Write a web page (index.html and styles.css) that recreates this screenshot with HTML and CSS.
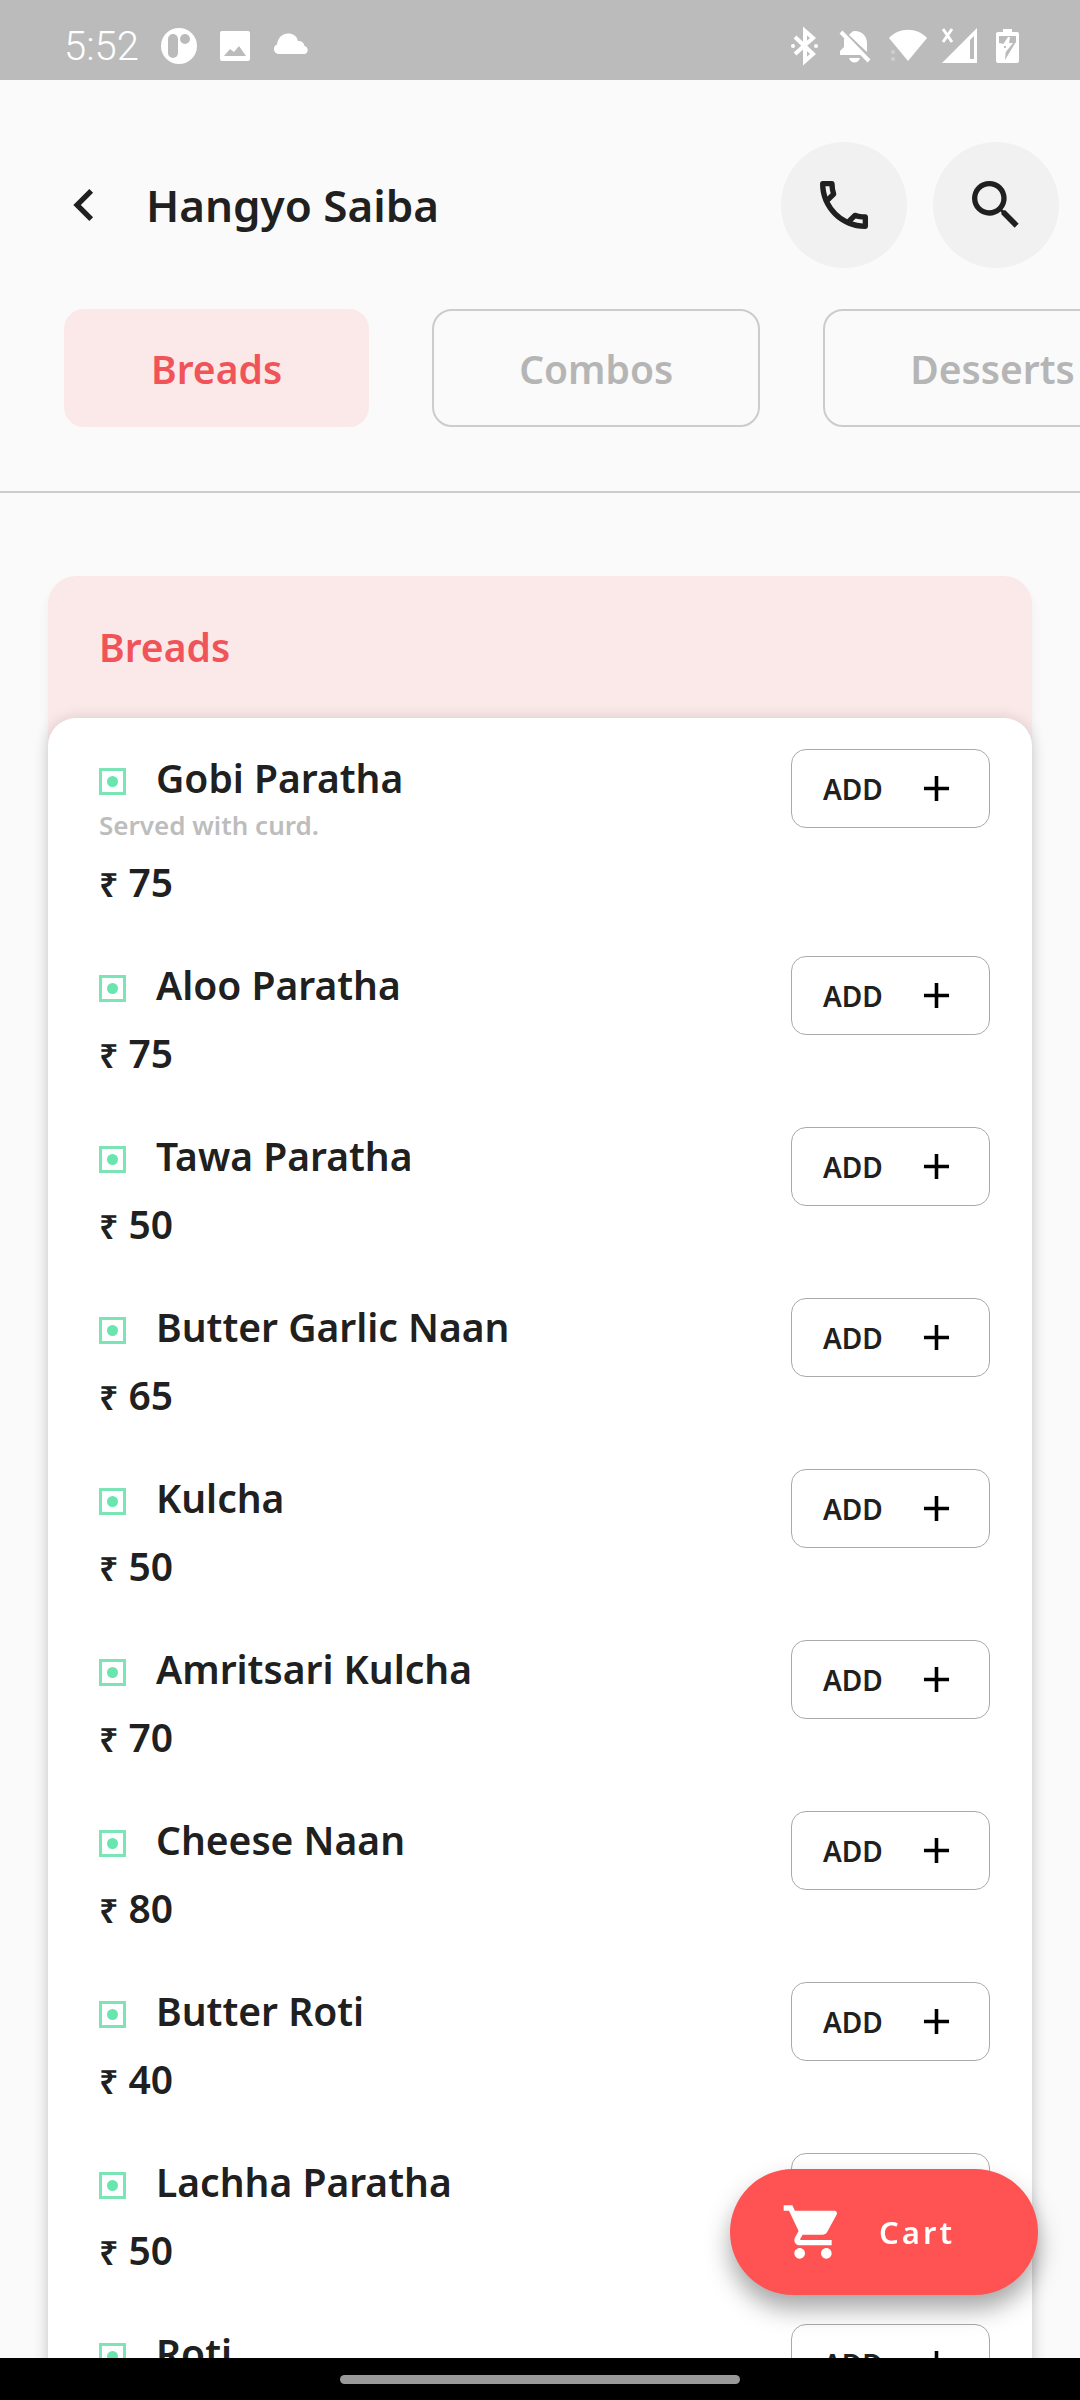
FILE: index.html
```html
<!DOCTYPE html>
<html lang="en">
<head>
  <meta charset="UTF-8">
  <meta name="viewport" content="width=device-width, initial-scale=1.0">
  <title>Hangyo Saiba</title>
  <link rel="stylesheet" href="styles.css">
</head>
<body>
  <div class="status-bar">
    <div class="status-left">
      <span class="clock">5:52</span>
      <svg viewBox="0 0 36 36"><circle cx="18" cy="18" r="18"/><rect class="cut" x="7" y="6" width="10" height="24" rx="5"/><circle class="cut" cx="24" cy="11" r="5"/></svg>
      <svg viewBox="0 0 36 36"><path fill-rule="evenodd" d="M5 3h26a2 2 0 0 1 2 2v26a2 2 0 0 1-2 2H5a2 2 0 0 1-2-2V5a2 2 0 0 1 2-2zm2 25h22l-7-10-5 6-4-3z"/></svg>
      <svg viewBox="0 0 36 36"><path d="M5 26a5 5 0 0 1-1-9.500C5 9 10 5 16 5.500c5 .500 8 3 9 7.500 4 0 6 2 6.500 5A4.200 4.200 0 0 1 32 26z"/></svg>
    </div>
    <div class="status-right">
      <svg viewBox="0 0 40 40"><path class="line" d="M11 11l18 17-8 7V5l8 7-18 16"/><circle cx="9" cy="20" r="2"/><circle cx="32" cy="20" r="2"/></svg>
      <svg viewBox="0 0 40 40"><path d="M14 9c2-2 3-4 6-4 7 0 12 5 12 12v9zM9 12l21 17H5v-4l4-4zM14 32h11c-2 6-9 6-11 0z"/><path class="line" d="M6 6l28 29"/></svg>
      <svg viewBox="0 0 40 40"><path d="M3 12c10-11 28-11 38 0L22 35z"/><circle class="faint" cx="7" cy="26" r="2"/><circle class="faint" cx="7" cy="33" r="2"/></svg>
      <svg viewBox="0 0 40 40"><path fill-rule="evenodd" d="M5 37L40 2v35zM33 14v19h4V10z"/><path class="thin" d="M6 3l9 13M15 3L6 16"/></svg>
      <svg viewBox="0 0 40 40"><path fill-rule="evenodd" d="M15 3h9v3h5a2 2 0 0 1 2 2v27a2 2 0 0 1-2 2H10a2 2 0 0 1-2-2V8a2 2 0 0 1 2-2h5zm-4 7v7l5 1v4h2l-1 12 9-15 2-3v-6z"/><path d="M20 11l-6 9h4l-1 7 8-10h-4l1-6z"/></svg>
    </div>
  </div>

  <header class="top">
    <button class="back" aria-label="Back">
      <svg viewBox="0 0 24 24"><path d="M15.410 7.410L14 6l-6 6 6 6 1.410-1.410L10.830 12z"/></svg>
    </button>
    <h1>Hangyo Saiba</h1>
    <button class="round" aria-label="Call">
      <svg viewBox="0 0 24 24"><path d="M6.540 5c.060.890.210 1.760.450 2.590l-1.200 1.200c-.410-1.200-.670-2.470-.760-3.790h1.510m9.860 12.020c.850.240 1.720.390 2.600.450v1.490c-1.320-.090-2.590-.350-3.800-.750l1.200-1.190M7.500 3H4c-.550 0-1 .450-1 1 0 9.390 7.610 17 17 17 .550 0 1-.450 1-1v-3.490c0-.550-.450-1-1-1-1.240 0-2.450-.200-3.570-.570a.840.840 0 0 0-.310-.050c-.260 0-.510.100-.710.290l-2.200 2.200a15.150 15.150 0 0 1-6.590-6.590l2.200-2.200c.280-.280.360-.670.250-1.020A11.360 11.360 0 0 1 8.500 4c0-.550-.450-1-1-1z"/></svg>
    </button>
    <button class="round" aria-label="Search">
      <svg viewBox="0 0 24 24"><path d="M15.500 14h-.790l-.280-.270A6.470 6.470 0 0 0 16 9.500 6.500 6.500 0 1 0 9.500 16c1.610 0 3.090-.590 4.230-1.570l.270.280v.790l5 4.990L20.490 19l-4.990-5zm-6 0C7.010 14 5 11.990 5 9.500S7.010 5 9.500 5 14 7.010 14 9.500 11.990 14 9.500 14z"/></svg>
    </button>
  </header>

  <nav class="tabs">
    <button class="tab active">Breads</button>
    <button class="tab">Combos</button>
    <button class="tab">Desserts</button>
  </nav>

  <main>
    <section class="category">
      <h2>Breads</h2>
      <ul class="items" id="items"></ul>
    </section>
  </main>

  <button class="cart">
    <svg viewBox="0 0 24 24"><path d="M7 18c-1.100 0-1.990.900-1.990 2S5.900 22 7 22s2-.900 2-2-.900-2-2-2zM1 2v2h2l3.600 7.590-1.350 2.450c-.160.280-.250.610-.250.960 0 1.100.900 2 2 2h12v-2H7.420c-.140 0-.250-.110-.250-.250l.030-.120.900-1.630h7.450c.750 0 1.410-.410 1.750-1.030l3.580-6.490A1 1 0 0 0 20 4H5.210l-.940-2H1zm16 16c-1.100 0-1.990.900-1.990 2s.890 2 1.990 2 2-.900 2-2-.900-2-2-2z"/></svg>
    <span>Cart</span>
  </button>

  <div class="nav-bar"><div class="handle"></div></div>

  <script>
    const breads = [
      { name: "Gobi Paratha", info: "Served with curd.", price: 75 },
      { name: "Aloo Paratha", price: 75 },
      { name: "Tawa Paratha", price: 50 },
      { name: "Butter Garlic Naan", price: 65 },
      { name: "Kulcha", price: 50 },
      { name: "Amritsari Kulcha", price: 70 },
      { name: "Cheese Naan", price: 80 },
      { name: "Butter Roti", price: 40 },
      { name: "Lachha Paratha", price: 50 },
      { name: "Roti" }
    ];

    document.getElementById("items").innerHTML = breads.map(item => `
      <li class="item">
        <div class="details">
          <h3><span class="veg"></span>${item.name}</h3>
          ${item.info ? `<p class="info">${item.info}</p>` : ""}
          ${item.price ? `<p class="price"><span class="rupee">₹</span>${item.price}</p>` : ""}
        </div>
        <button class="add">ADD
          <svg viewBox="0 0 24 24"><path d="M19 13h-6v6h-2v-6H5v-2h6V5h2v6h6z"/></svg>
        </button>
      </li>`).join("");
  </script>
</body>
</html>
```
FILE: styles.css
```css
* { box-sizing: border-box; }
body {
  margin: 0;
  height: 100vh;
  display: flex;
  flex-direction: column;
  overflow: hidden;
  background: #fafafa;
  color: #202020;
  font-family: "Noto Sans", "Open Sans", sans-serif;
  font-weight: 600;
}
h1, h2, h3, p, ul { margin: 0; padding: 0; font-weight: 600; }
ul { list-style: none; }
button {
  font: inherit;
  color: inherit;
  border: none;
  padding: 0;
  background: none;
  cursor: pointer;
}
svg { display: block; flex: none; fill: currentColor; }

/* Status bar */
.status-bar {
  flex: none;
  display: flex;
  justify-content: space-between;
  height: 80px;
  padding: 12px 52px 0 64px;
  background: #bbb;
  color: #fff;
}
.status-left, .status-right { display: flex; align-items: center; }
.status-left { gap: 20px; }
.status-right { gap: 11px; }
.status-left svg { width: 36px; height: 36px; }
.status-right svg { width: 40px; height: 40px; overflow: visible; }
.clock { margin-right: 2px; font-family: Roboto, sans-serif; font-size: 40px; font-weight: 300; }
.cut { fill: #bbb; }
.faint { opacity: 0.3; }
.line { fill: none; stroke: #fff; stroke-width: 4; }
.thin { fill: none; stroke: #fff; stroke-width: 3; }

/* Header */
.top {
  flex: none;
  display: flex;
  align-items: center;
  gap: 26px;
  padding: 62px 21px 0 52px;
}
.top h1 { flex: 1; padding-left: 4px; font-size: 44px; line-height: 64px; }
.top svg { width: 64px; height: 64px; }
.round {
  display: flex;
  align-items: center;
  justify-content: center;
  width: 126px;
  height: 126px;
  border-radius: 50%;
  background: #f1f1f1;
}

/* Category tabs */
.tabs {
  flex: none;
  display: flex;
  gap: 63px;
  padding: 41px 0 64px 64px;
  overflow: hidden;
  border-bottom: 2px solid #ccc;
}
.tab {
  flex: none;
  height: 118px;
  padding: 0 85px;
  border: 2px solid #ccc;
  border-radius: 20px;
  color: #b5b5b5;
  font-size: 39px;
}
.tab.active { background: #fbe9e9; border-color: #fbe9e9; color: #f05458; }

/* Menu list */
main { flex: 1; min-height: 0; padding: 83px 48px 0; overflow-y: auto; scrollbar-width: none; }
.category { border-radius: 28px; background: #fbe9e9; box-shadow: 0 8px 12px rgba(0, 0, 0, 0.05); }
.category h2 {
  padding: 43px 51px;
  color: #f05458;
  font-size: 39px;
  line-height: 56px;
}
.items {
  display: flex;
  flex-direction: column;
  gap: 45px;
  padding: 31px 42px 60px 51px;
  border-radius: 28px;
  background: #fff;
  box-shadow: 0 2px 16px rgba(0, 0, 0, 0.18);
}
.item { display: flex; justify-content: space-between; align-items: flex-start; }
.item h3 {
  display: flex;
  align-items: center;
  gap: 30px;
  font-size: 39px;
  line-height: 58px;
}
.veg {
  display: flex;
  align-items: center;
  justify-content: center;
  width: 27px;
  height: 27px;
  margin-top: 6px;
  border: 3px solid #7be5b5;
}
.veg::after {
  content: "";
  width: 11px;
  height: 11px;
  border-radius: 50%;
  background: #69e6ae;
}
.info { color: #bdbdbd; font-size: 26px; line-height: 36px; }
.price { margin-top: 10px; font-size: 39px; line-height: 58px; }
.rupee { margin-right: 10px; font-size: 34px; line-height: 1; }
.add {
  display: flex;
  align-items: center;
  justify-content: space-between;
  width: 199px;
  height: 79px;
  padding: 0 31px;
  border: 1px solid #aaa;
  border-radius: 15px;
  font-size: 28px;
}
.add svg { width: 43px; height: 43px; fill: #000; }

/* Floating cart button */
.cart {
  position: fixed;
  right: 42px;
  bottom: 105px;
  display: flex;
  align-items: center;
  gap: 34px;
  height: 126px;
  padding: 0 83px 0 51px;
  border-radius: 63px;
  background: #ff5252;
  box-shadow: 0 14px 24px rgba(0, 0, 0, 0.35);
  color: #fff;
  font-size: 31px;
  letter-spacing: 3px;
}
.cart svg { width: 64px; height: 64px; }

/* System navigation */
.nav-bar {
  flex: none;
  display: flex;
  justify-content: center;
  height: 42px;
  padding-top: 17px;
  background: #000;
}
.handle { width: 37%; height: 9px; border-radius: 5px; background: #999; }
```
